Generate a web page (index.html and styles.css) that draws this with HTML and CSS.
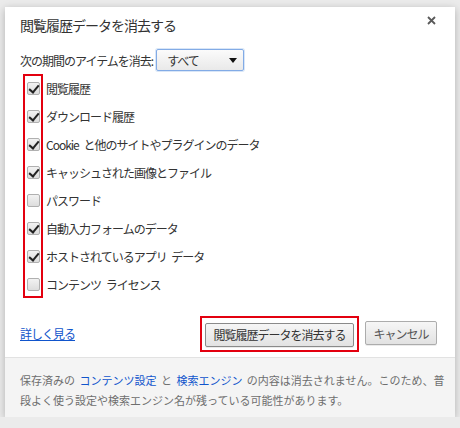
FILE: index.html
```html
<!DOCTYPE html>
<html lang="ja">
<head>
  <meta charset="UTF-8">
  <title>閲覧履歴データを消去する</title>
  <link rel="stylesheet" href="styles.css">
</head>
<body>
  <div class="page">
    <div class="dialog">
      <!-- Header -->
      <div class="dialog-header">
        <h1 class="title">閲覧履歴データを消去する</h1>
        <span class="close-icon" aria-label="閉じる">
          <svg viewBox="0 0 9 9" width="9" height="9">
            <path d="M1 1L8 8M8 1L1 8" stroke="#5a5a5a" stroke-width="1.8"></path>
          </svg>
        </span>
      </div>

      <!-- Period -->
      <div class="period-row">
        <span class="period-label">次の期間のアイテムを消去:</span>
        <div class="select">
          <span>すべて</span>
          <span class="select-arrow"></span>
        </div>
      </div>

      <!-- Options -->
      <div class="options">
        <div class="highlight highlight-checks"></div>
        <label class="option"><span class="checkbox checked"></span>閲覧履歴</label>
        <label class="option"><span class="checkbox checked"></span>ダウンロード履歴</label>
        <label class="option"><span class="checkbox checked"></span>Cookie と他のサイトやプラグインのデータ</label>
        <label class="option"><span class="checkbox checked"></span>キャッシュされた画像とファイル</label>
        <label class="option"><span class="checkbox"></span>パスワード</label>
        <label class="option"><span class="checkbox checked"></span>自動入力フォームのデータ</label>
        <label class="option"><span class="checkbox checked"></span>ホストされているアプリ データ</label>
        <label class="option"><span class="checkbox"></span>コンテンツ ライセンス</label>
      </div>

      <!-- Actions -->
      <div class="actions">
        <a class="more-link" href="#">詳しく見る</a>
        <div class="buttons">
          <div class="button-wrap">
            <div class="highlight highlight-button"></div>
            <button class="btn btn-primary">閲覧履歴データを消去する</button>
          </div>
          <button class="btn btn-cancel">キャンセル</button>
        </div>
      </div>

      <!-- Footer note -->
      <div class="footer">
        保存済みの <a href="#">コンテンツ設定</a> と <a href="#">検索エンジン</a> の内容は消去されません。このため、普段よく使う設定や検索エンジン名が残っている可能性があります。
      </div>
    </div>
  </div>
</body>
</html>
```

FILE: styles.css
```css
* {
  margin: 0;
  padding: 0;
  box-sizing: border-box;
  font-family: "Noto Sans CJK JP", "Liberation Sans", sans-serif;
}

body {
  background-color: #ebebeb;
  color: #333;
}

.page {
  padding: 7px 5px 0 5px;
}

.dialog {
  width: 450px;
  height: 410px;
  background-color: white;
  display: flex;
  flex-direction: column;
  box-shadow: 0 2px 8px rgba(0, 0, 0, 0.25);
}

.dialog-header {
  display: flex;
  justify-content: space-between;
  align-items: flex-start;
  padding: 9px 19px 0 15px;
}

.title {
  font-size: 14px;
  font-weight: normal;
  line-height: 18px;
  letter-spacing: -1px;
  color: #333;
}

.close-icon {
  display: flex;
  width: 9px;
  height: 9px;
}

.period-row {
  display: flex;
  align-items: center;
  gap: 3px;
  margin-top: 15px;
  padding-left: 15px;
  font-size: 12px;
  letter-spacing: -1px;
}

.select {
  width: 88px;
  height: 22px;
  display: flex;
  align-items: center;
  justify-content: space-between;
  padding: 0 6px 0 10px;
  border: 1px solid #82abe6;
  border-radius: 2px;
  background: linear-gradient(#fbfbfb, #e9e9e9);
  box-shadow: 0 0 0 1px rgba(130, 171, 230, 0.3);
}

.select-arrow {
  width: 0;
  height: 0;
  border-left: 4px solid transparent;
  border-right: 4px solid transparent;
  border-top: 5px solid #111;
}

.options {
  position: relative;
  margin-top: 3px;
  display: flex;
  flex-direction: column;
}

.option {
  display: flex;
  align-items: center;
  gap: 6px;
  height: 28px;
  padding-left: 22px;
  font-size: 12px;
  letter-spacing: -1px;
  word-spacing: 3px;
  color: #333;
}

.checkbox {
  width: 13px;
  height: 13px;
  border: 1px solid #b0b0b0;
  border-radius: 2px;
  background: linear-gradient(#f2f2f2, #dddddd);
  position: relative;
}

.checkbox.checked::after {
  content: "";
  position: absolute;
  left: 3px;
  top: 0px;
  width: 4px;
  height: 8px;
  border-right: 2px solid #222;
  border-bottom: 2px solid #222;
  transform: rotate(40deg);
}

.highlight {
  position: absolute;
  border: 2px solid #e3000f;
  pointer-events: none;
}

.highlight-checks {
  left: 18px;
  top: 0;
  width: 20px;
  height: 224px;
}

.actions {
  display: flex;
  justify-content: space-between;
  align-items: center;
  margin-top: 23px;
  padding: 0 18px 0 15px;
}

.more-link {
  font-size: 12px;
  letter-spacing: -1px;
  color: #1155cc;
}

.buttons {
  display: flex;
  gap: 11px;
}

.button-wrap {
  position: relative;
}

.highlight-button {
  top: -5px;
  left: -5px;
  right: -5px;
  bottom: -5px;
}

.btn {
  height: 24px;
  font-size: 12px;
  letter-spacing: -1px;
  color: #333;
  border: 1px solid #acacac;
  border-radius: 2px;
  background: linear-gradient(#f6f6f6, #e2e2e2);
  box-shadow: 0 1px 0 rgba(0, 0, 0, 0.08);
}

.btn-primary {
  width: 149px;
  border-color: #8a8a8a;
}

.btn-cancel {
  width: 72px;
  color: #555;
}

.footer {
  margin-top: auto;
  height: 60px;
  padding: 12px 6px 0 15px;
  background-color: #f4f4f4;
  border-top: 1px solid #e2e2e2;
  font-size: 11px;
  word-spacing: 1px;
  line-height: 20px;
  color: #6e6e6e;
}

.footer a {
  margin: 0 1px;
  color: #1155cc;
  text-decoration: none;
}
```
